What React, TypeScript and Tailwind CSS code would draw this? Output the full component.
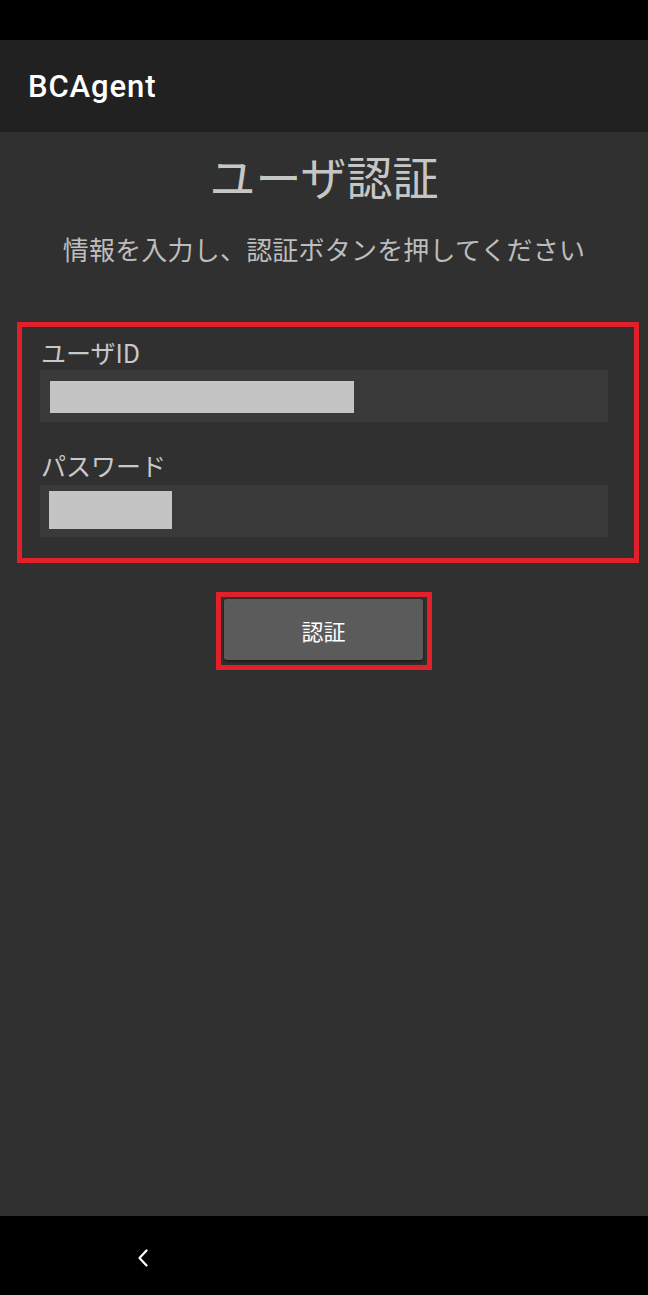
const cjk = "font-['Noto_Sans_CJK_JP',_'Noto_Sans',_sans-serif]";

const FieldBlock = ({ label, inputClass, blockClass }: { label: string; inputClass: string; blockClass: string }) => (
  <div>
    <p className="text-[25px] leading-[25px] text-[#c8c8c8] pl-[1px]">{label}</p>
    <div className={`h-[52px] bg-[#3a3a3a] ${inputClass}`}>
      <div className={`bg-[#c4c4c4] ${blockClass}`} />
    </div>
  </div>
);

const App = () => {
  return (
    <div className={`flex flex-col h-[1295px] w-full bg-[#303030] ${cjk}`}>
      {/* status bar */}
      <div className="h-[40px] bg-black" />

      {/* app bar */}
      <div className="h-[92px] bg-[#212121] pl-[28px] pt-[29px]">
        <h1 className="font-['Roboto',_sans-serif] font-medium text-[31px] leading-[36px] tracking-[0.9px] text-white">
          BCAgent
        </h1>
      </div>

      {/* main */}
      <main className="flex-1 flex flex-col">
        <h2 className="pt-[20px] text-center text-[46px] leading-[46px] text-[#c6c6c6]">ユーザ認証</h2>
        <p className="pt-[38px] text-center text-[26px] leading-[26px] tracking-[0.2px] text-[#bdbdbd]">
          情報を入力し、認証ボタンを押してください
        </p>

        <div className="mt-[60px] ml-[17px] mr-[9px] border-[5px] border-[#e2202a] pl-[18px] pr-[26px] pt-[13px] pb-[21px]">
          <FieldBlock label="ユーザID" inputClass="mt-[5px] pt-[11px] pl-[10px]" blockClass="w-[304px] h-[32px]" />
          <div className="mt-[31px]">
            <FieldBlock label="パスワード" inputClass="mt-[7px] pt-[6px] pl-[9px]" blockClass="w-[123px] h-[38px]" />
          </div>
        </div>

        <div className="mt-[29px] mx-auto border-[5px] border-[#e2202a] pt-[2px] pl-[3px] pr-[4px] pb-[5px]">
          <button className="block w-[199px] h-[61px] rounded-[3px] bg-[#5b5b5b] shadow-[0_2px_3px_rgba(0,0,0,0.45)] text-[22px] leading-[22px] text-white">
            認証
          </button>
        </div>
      </main>

      {/* navigation bar */}
      <div className="h-[79px] bg-black flex items-start pl-[137px] pt-[33px]">
        <svg width="12" height="18" viewBox="0 0 12 18" fill="none">
          <polyline points="9.5,1.5 2.5,9 9.5,16.5" stroke="white" strokeWidth="2.2" strokeLinecap="round" strokeLinejoin="round" />
        </svg>
      </div>
    </div>
  );
};

export default App;
